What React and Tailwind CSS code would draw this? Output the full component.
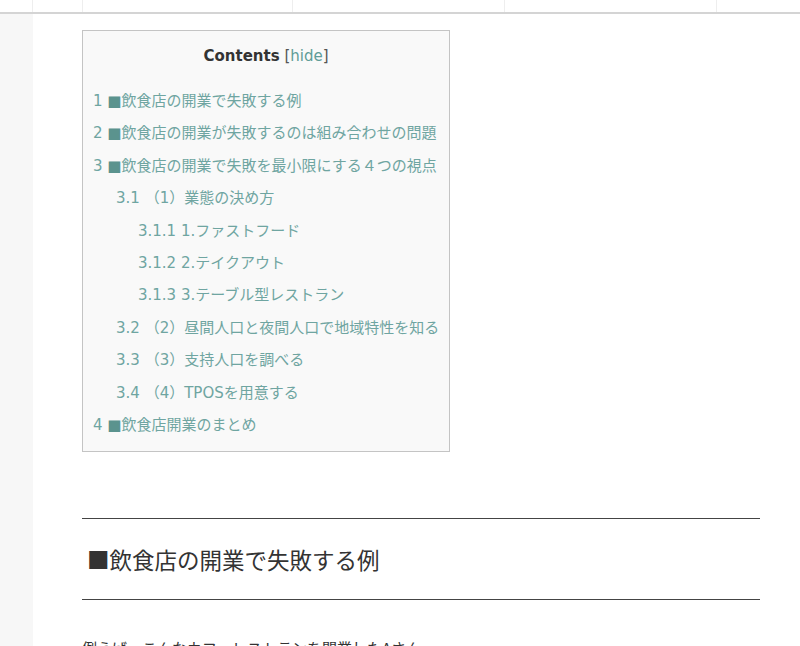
const toc = [
  { n: "1", t: "■飲食店の開業で失敗する例", lv: 0 },
  { n: "2", t: "■飲食店の開業が失敗するのは組み合わせの問題", lv: 0 },
  { n: "3", t: "■飲食店の開業で失敗を最小限にする４つの視点", lv: 0 },
  { n: "3.1", t: "（1）業態の決め方", lv: 1 },
  { n: "3.1.1", t: "1.ファストフード", lv: 2 },
  { n: "3.1.2", t: "2.テイクアウト", lv: 2 },
  { n: "3.1.3", t: "3.テーブル型レストラン", lv: 2 },
  { n: "3.2", t: "（2）昼間人口と夜間人口で地域特性を知る", lv: 1 },
  { n: "3.3", t: "（3）支持人口を調べる", lv: 1 },
  { n: "3.4", t: "（4）TPOSを用意する", lv: 1 },
  { n: "4", t: "■飲食店開業のまとめ", lv: 0 },
];

const indent = ["pl-0", "pl-[23px]", "pl-[45px]"];

const Label = ({ text }) =>
  text.startsWith("■") ? (
    <>
      <span className="text-[#5b938e]">■</span>
      {text.slice(1)}
    </>
  ) : (
    text
  );

const App = () => {
  return (
    <div
      className="min-h-[646px] overflow-hidden bg-white text-[#333]"
      style={{ fontFamily: '"DejaVu Sans", "Noto Sans CJK JP", sans-serif' }}
    >
      {/* top bar */}
      <div className="flex h-[14px] border-b-2 border-[#d4d4d4] bg-white">
        <div className="w-[33px] border-r border-[#eee]" />
        <div className="w-[50px] border-r border-[#eee]" />
        <div className="w-[210px] border-r border-[#eee]" />
        <div className="w-[212px] border-r border-[#eee]" />
        <div className="w-[212px] border-r border-[#eee]" />
        <div className="flex-1" />
      </div>

      <div className="flex">
        <div className="w-[33px] shrink-0 bg-[#f7f7f7]" />
        <div className="w-[727px] pl-[49px] pt-[16px]">
          {/* table of contents */}
          <div className="w-[368px] border border-[#c4c4c4] bg-[#f9f9f9] px-[10px] pb-[10px] pt-[15px]">
            <p className="text-center text-[15px] leading-[20px]">
              <span className="font-bold">Contents</span>{" "}
              <span className="text-[#555]">
                [<span className="text-[#5f9c97]">hide</span>]
              </span>
            </p>
            <ul className="mt-[19px]">
              {toc.map((item) => (
                <li
                  key={item.n}
                  className={`${indent[item.lv]} whitespace-nowrap text-[15px] leading-[32.4px] text-[#6fa5a1]`}
                >
                  {item.n} <Label text={item.t} />
                </li>
              ))}
            </ul>
          </div>

          {/* article */}
          <div className="mt-[66px] border-y border-[#444] py-[26px] pl-[5px]">
            <h2
              className="text-[22.5px] leading-[28px] text-[#333]"
              style={{ fontFamily: '"Noto Sans CJK JP", sans-serif' }}
            >
              ■飲食店の開業で失敗する例
            </h2>
          </div>
          <p
            className="mt-[36px] text-[15px] leading-[24px] text-[#333]"
            style={{ fontFamily: '"Noto Sans CJK JP", sans-serif' }}
          >
            例えば、こんなカフェレストランを開業したAさん
          </p>
        </div>
      </div>
    </div>
  );
};

export default App;
